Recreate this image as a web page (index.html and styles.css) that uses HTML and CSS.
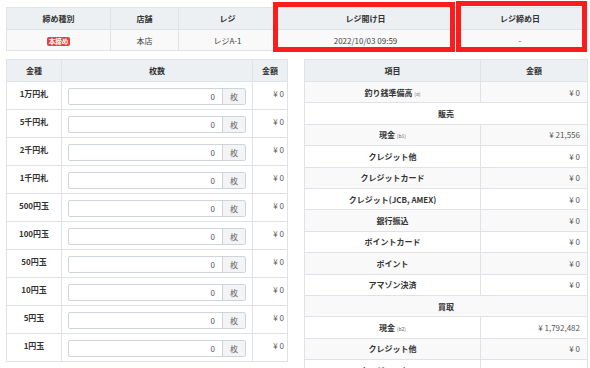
FILE: index.html
```html
<!DOCTYPE html>
<html lang="ja">
<head>
    <meta charset="UTF-8">
    <meta name="viewport" content="width=device-width, initial-scale=1.0">
    <title>レジ締め</title>
    <link rel="stylesheet" href="styles.css">
</head>
<body>

    <div class="summary-wrap">
        <table class="tbl summary">
            <colgroup>
                <col style="width: 104px">
                <col style="width: 68px">
                <col style="width: 98px">
                <col style="width: 178px">
                <col style="width: 131px">
            </colgroup>
            <tr>
                <th>締め種別</th>
                <th>店舗</th>
                <th>レジ</th>
                <th>レジ開け日</th>
                <th>レジ締め日</th>
            </tr>
            <tr>
                <td><span class="badge">本締め</span></td>
                <td>本店</td>
                <td>レジA-1</td>
                <td>2022/10/03 09:59</td>
                <td>-</td>
            </tr>
        </table>
        <div class="mark mark-open"></div>
        <div class="mark mark-close"></div>
    </div>

    <div class="columns">
        <table class="tbl coins">
            <colgroup>
                <col style="width: 55px">
                <col style="width: 191px">
                <col style="width: 35px">
            </colgroup>
            <tr><th>金種</th><th>枚数</th><th>金額</th></tr>
            <tr>
                <td class="label">1万円札</td>
                <td><div class="qty"><span class="qty-val">0</span><span class="qty-unit">枚</span></div></td>
                <td class="amount">¥ 0</td>
            </tr>
            <tr>
                <td class="label">5千円札</td>
                <td><div class="qty"><span class="qty-val">0</span><span class="qty-unit">枚</span></div></td>
                <td class="amount">¥ 0</td>
            </tr>
            <tr>
                <td class="label">2千円札</td>
                <td><div class="qty"><span class="qty-val">0</span><span class="qty-unit">枚</span></div></td>
                <td class="amount">¥ 0</td>
            </tr>
            <tr>
                <td class="label">1千円札</td>
                <td><div class="qty"><span class="qty-val">0</span><span class="qty-unit">枚</span></div></td>
                <td class="amount">¥ 0</td>
            </tr>
            <tr>
                <td class="label">500円玉</td>
                <td><div class="qty"><span class="qty-val">0</span><span class="qty-unit">枚</span></div></td>
                <td class="amount">¥ 0</td>
            </tr>
            <tr>
                <td class="label">100円玉</td>
                <td><div class="qty"><span class="qty-val">0</span><span class="qty-unit">枚</span></div></td>
                <td class="amount">¥ 0</td>
            </tr>
            <tr>
                <td class="label">50円玉</td>
                <td><div class="qty"><span class="qty-val">0</span><span class="qty-unit">枚</span></div></td>
                <td class="amount">¥ 0</td>
            </tr>
            <tr>
                <td class="label">10円玉</td>
                <td><div class="qty"><span class="qty-val">0</span><span class="qty-unit">枚</span></div></td>
                <td class="amount">¥ 0</td>
            </tr>
            <tr>
                <td class="label">5円玉</td>
                <td><div class="qty"><span class="qty-val">0</span><span class="qty-unit">枚</span></div></td>
                <td class="amount">¥ 0</td>
            </tr>
            <tr>
                <td class="label">1円玉</td>
                <td><div class="qty"><span class="qty-val">0</span><span class="qty-unit">枚</span></div></td>
                <td class="amount">¥ 0</td>
            </tr>
        </table>

        <table class="tbl ledger">
            <colgroup>
                <col style="width: 176px">
                <col style="width: 107px">
            </colgroup>
            <tr><th>項目</th><th>金額</th></tr>
            <tr class="odd"><td class="item">釣り銭準備高 <small>(a)</small></td><td class="amount">¥ 0</td></tr>
            <tr><td class="section" colspan="2">販売</td></tr>
            <tr class="odd"><td class="item">現金 <small>(b1)</small></td><td class="amount">¥ 21,556</td></tr>
            <tr><td class="item">クレジット他</td><td class="amount">¥ 0</td></tr>
            <tr class="odd"><td class="item">クレジットカード</td><td class="amount">¥ 0</td></tr>
            <tr><td class="item">クレジット(JCB, AMEX)</td><td class="amount">¥ 0</td></tr>
            <tr class="odd"><td class="item">銀行振込</td><td class="amount">¥ 0</td></tr>
            <tr><td class="item">ポイントカード</td><td class="amount">¥ 0</td></tr>
            <tr class="odd"><td class="item">ポイント</td><td class="amount">¥ 0</td></tr>
            <tr><td class="item">アマゾン決済</td><td class="amount">¥ 0</td></tr>
            <tr class="odd"><td class="section" colspan="2">買取</td></tr>
            <tr><td class="item">現金 <small>(b2)</small></td><td class="amount">¥ 1,792,482</td></tr>
            <tr class="odd"><td class="item">クレジット他</td><td class="amount">¥ 0</td></tr>
            <tr><td class="item">クレジットカード</td><td class="amount">¥ 0</td></tr>
        </table>
    </div>

</body>
</html>
```

FILE: styles.css
```css
html, body {
    overflow: hidden;
}
body {
    margin: 0;
    padding: 7px 0 0 6px;
    font-family: "Noto Sans CJK JP", "Noto Sans", sans-serif;
    font-size: 8px;
    color: #444;
    background: #fff;
}
.tbl {
    border-collapse: collapse;
    table-layout: fixed;
}
.tbl th,
.tbl td {
    border: 1px solid #dfe2e6;
    padding: 0;
    text-align: center;
}
.tbl th {
    background: #edf0f3;
    color: #333;
    font-weight: bold;
    height: 21px;
}
.summary-wrap {
    position: relative;
    width: 579px;
}
.summary {
    width: 579px;
}
.summary td {
    height: 20px;
    background: #f9f9fa;
    color: #444;
}
.badge {
    display: inline-block;
    background: #e8403f;
    color: #fff;
    font-size: 6.5px;
    font-weight: bold;
    line-height: 9px;
    padding: 0 2px;
    border-radius: 2px;
}
.mark {
    position: absolute;
    border: 5px solid #fb1d1d;
    box-sizing: border-box;
}
.mark-open {
    left: 267px;
    top: -5px;
    width: 182px;
    height: 50px;
}
.mark-close {
    left: 450px;
    top: -6px;
    width: 131px;
    height: 51px;
}
.columns {
    display: flex;
    gap: 16px;
    margin-top: 8px;
    align-items: flex-start;
}
.coins {
    width: 281px;
}
.coins td {
    vertical-align: top;
    background: #fff;
    line-height: 11px;
}
.coins .label {
    font-weight: bold;
    color: #333;
    padding-top: 6px;
}
.coins .amount {
    text-align: right;
    padding: 6px 3px 0 0;
    color: #555;
}
.qty {
    display: flex;
    height: 17px;
    margin: 6px 6px 4px 6px;
    border: 1px solid #cfd4da;
    border-radius: 2px;
    box-sizing: border-box;
}
.qty-val {
    flex: 1;
    text-align: right;
    line-height: 15px;
    padding-right: 7px;
    color: #555;
}
.qty-unit {
    width: 22px;
    line-height: 15px;
    background: #f3f4f6;
    border-left: 1px solid #cfd4da;
    color: #666;
}
.ledger {
    width: 283px;
}
.ledger td {
    height: 20.4px;
    background: #fff;
}
.ledger tr.odd td {
    background: #f9f9fa;
}
.ledger .item {
    font-weight: bold;
    color: #333;
}
.ledger .section {
    font-weight: bold;
    color: #333;
}
.ledger small {
    font-size: 5px;
    font-weight: normal;
    color: #666;
}
.ledger .amount {
    text-align: right;
    padding-right: 7px;
    color: #555;
}
```
